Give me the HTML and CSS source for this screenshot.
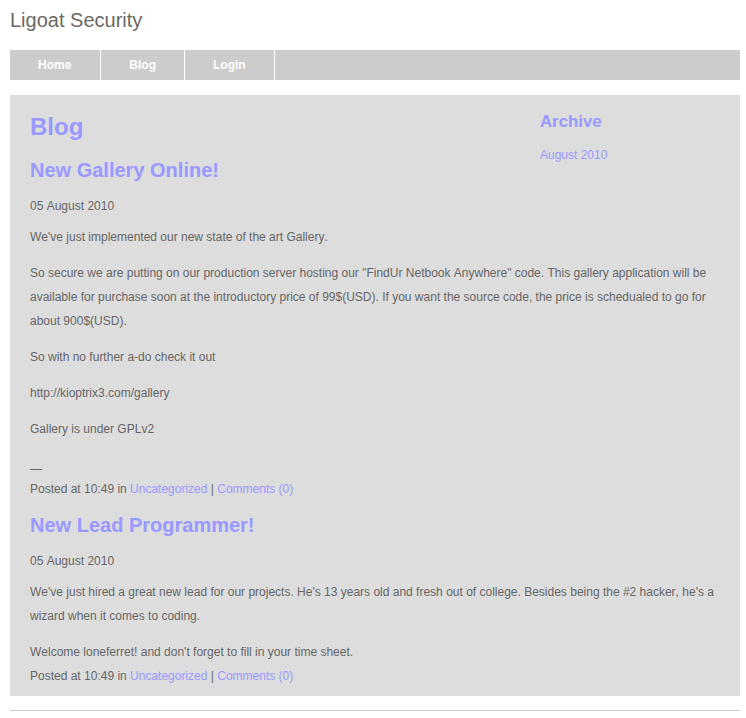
FILE: index.html
```html
<!DOCTYPE html>
<html>
<head>
<meta charset="utf-8">
<title>Ligoat Security - Blog</title>
<link rel="stylesheet" href="styles.css">
</head>
<body>
<div class="page">
  <div class="site-title">Ligoat Security</div>
  <ul class="nav">
    <li><a href="#">Home</a></li>
    <li><a href="#">Blog</a></li>
    <li><a href="#">Login</a></li>
  </ul>
  <div class="content">
    <div class="sidebar">
      <h3 class="side-title">Archive</h3>
      <a class="side-link" href="#">August 2010</a>
    </div>
    <h1 class="page-title">Blog</h1>

    <div class="post">
      <h2 class="post-title">New Gallery Online!</h2>
      <div class="post-date">05 August 2010</div>
      <p>We've just implemented our new state of the art Gallery.</p>
      <p>So secure we are putting on our production server hosting our "FindUr Netbook Anywhere" code. This gallery application will be available for purchase soon at the introductory price of 99$(USD). If you want the source code, the price is schedualed to go for about 900$(USD).</p>
      <p>So with no further a-do check it out</p>
      <p>http://kioptrix3.com/gallery</p>
      <p>Gallery is under GPLv2</p>
      <div class="sig">—</div>
      <div class="post-meta">Posted at 10:49 in <a href="#">Uncategorized</a> | <a href="#">Comments (0)</a></div>
    </div>

    <div class="post">
      <h2 class="post-title">New Lead Programmer!</h2>
      <div class="post-date">05 August 2010</div>
      <p>We've just hired a great new lead for our projects. He's 13 years old and fresh out of college. Besides being the #2 hacker, he's a wizard when it comes to coding.</p>
      <p>Welcome loneferret! and don't forget to fill in your time sheet.</p>
      <div class="post-meta tight">Posted at 10:49 in <a href="#">Uncategorized</a> | <a href="#">Comments (0)</a></div>
    </div>
  </div>
  <div class="footer"></div>
</div>
</body>
</html>
```
FILE: styles.css
```css
html, body {
  margin: 0;
  padding: 0;
  background: #fff;
}
body {
  font-family: "Liberation Sans", Arial, sans-serif;
  color: #666;
  font-size: 12px;
  font-kerning: none;
}
.page {
  width: 730px;
  padding: 10px;
}
a {
  color: #99f;
  text-decoration: none;
}
.site-title {
  font-size: 20px;
  line-height: 20px;
  height: 40px;
  color: #6c6864;
}
.nav {
  list-style: none;
  margin: 0;
  padding: 0;
  height: 30px;
  background: #ccc;
  display: flex;
}
.nav li {
  border-right: 1px solid #fff;
}
.nav a {
  display: block;
  padding: 0 28px;
  line-height: 30px;
  color: #fff;
  font-weight: bold;
  font-size: 12px;
}
.nav li:first-child a {
  padding-right: 29px;
}
.content {
  margin-top: 15px;
  background: #ddd;
  padding: 20px 20px 10px;
  display: flow-root;
}
.sidebar {
  float: right;
  width: 180px;
}
.side-title {
  margin: 0;
  font-size: 16.8px;
  line-height: 14px;
  color: #99f;
}
.side-link {
  display: block;
  margin-top: 14px;
  line-height: 24px;
}
.page-title {
  margin: 0 0 19px;
  font-size: 24px;
  line-height: 24px;
  color: #99f;
}
.post-title {
  margin: 14px 0 0;
  font-size: 20px;
  line-height: 24px;
  color: #99f;
}
.post-date {
  margin-top: 12px;
  line-height: 24px;
}
.post p {
  margin: 7px 0 0;
  line-height: 24px;
}
.post p + p {
  margin-top: 12px;
}
.sig {
  margin-top: 18px;
  line-height: 20px;
}
.post-meta {
  line-height: 20px;
}
.post-meta.tight {
  margin-top: 2px;
}
.footer {
  margin-top: 14px;
  border-top: 1px solid #ccc;
}
```
